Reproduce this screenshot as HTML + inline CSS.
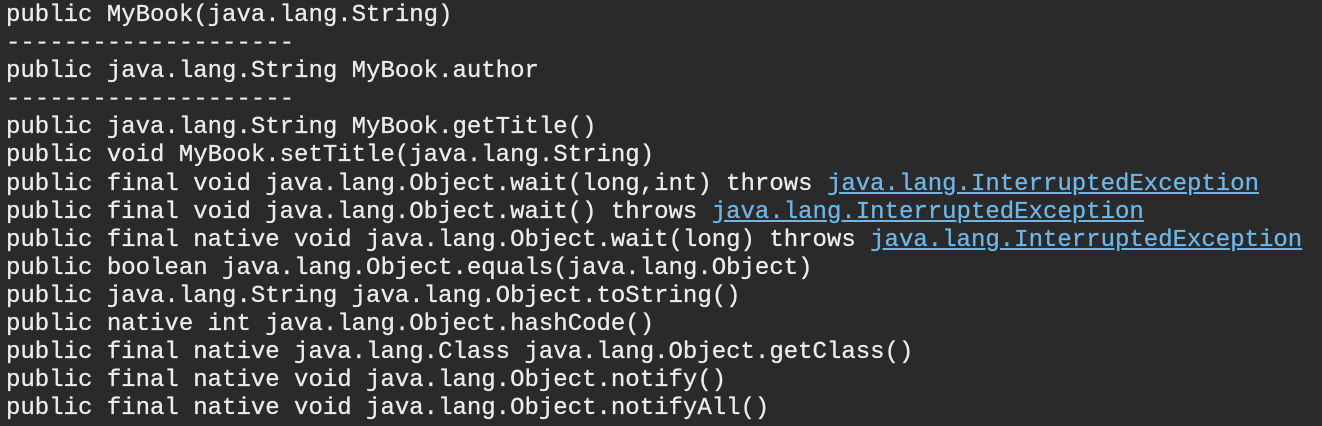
<!DOCTYPE html>
<html><head><style>
html,body{margin:0;padding:0;background:#2a2a2a;width:1322px;height:426px;overflow:hidden}
pre{margin:0;padding:2px 0 0 6px;font-family:"Liberation Mono",monospace;font-size:24px;line-height:28.1px;color:#ececec;white-space:pre;-webkit-text-stroke:0.3px #ececec}
a{color:#6cb7e8;text-decoration:underline;-webkit-text-stroke:0.3px #6cb7e8}
</style></head><body><pre>public MyBook(java.lang.String)
--------------------
public java.lang.String MyBook.author
--------------------
public java.lang.String MyBook.getTitle()
public void MyBook.setTitle(java.lang.String)
public final void java.lang.Object.wait(long,int) throws <a>java.lang.InterruptedException</a>
public final void java.lang.Object.wait() throws <a>java.lang.InterruptedException</a>
public final native void java.lang.Object.wait(long) throws <a>java.lang.InterruptedException</a>
public boolean java.lang.Object.equals(java.lang.Object)
public java.lang.String java.lang.Object.toString()
public native int java.lang.Object.hashCode()
public final native java.lang.Class java.lang.Object.getClass()
public final native void java.lang.Object.notify()
public final native void java.lang.Object.notifyAll()</pre></body></html>
